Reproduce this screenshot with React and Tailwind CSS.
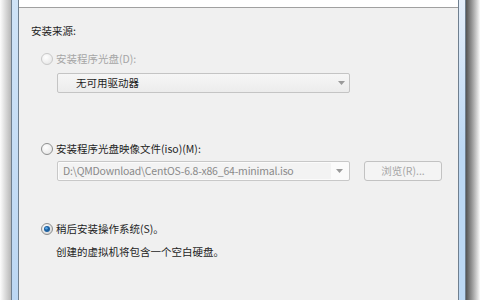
import React from "react";

const font = { fontFamily: '"Noto Sans CJK SC", "Noto Sans", sans-serif' };

const Radio = ({ checked, disabled }) => (
  <svg width="12" height="12" viewBox="0 0 12 12" className="shrink-0">
    <defs>
      <radialGradient id={checked ? "rg-on" : "rg-off"} cx="0.4" cy="0.35" r="0.7">
        <stop offset="0" stopColor="#ffffff" />
        <stop offset="1" stopColor={disabled ? "#e6e6e6" : "#d4d4d4"} />
      </radialGradient>
    </defs>
    <circle
      cx="6"
      cy="6"
      r="5.5"
      fill={`url(#${checked ? "rg-on" : "rg-off"})`}
      stroke={disabled ? "#c8c8c8" : "#8e8f8f"}
    />
    {checked && (
      <>
        <circle cx="6" cy="6" r="3" fill="#1b5f9f" />
        <circle cx="5.4" cy="5.3" r="1.3" fill="#5aa6e6" />
      </>
    )}
  </svg>
);

const Arrow = () => (
  <svg width="7" height="4" viewBox="0 0 7 4">
    <path d="M0 0 L7 0 L3.5 4 Z" fill="#9a9a9a" />
  </svg>
);

export default function App() {
  return (
    <div className="w-[480px] h-[300px] flex overflow-hidden bg-white" style={font}>
      {/* left shadow + frame */}
      <div className="w-[11px] h-full bg-gradient-to-r from-[#fdfdfd] to-[#b8b8b8]" />
      <div className="w-[8px] h-full border-l border-r border-[#6f7f8f] bg-gradient-to-b from-[#cfe3f7] to-[#bcd7f3]" />

      {/* content */}
      <div className="flex-1 h-full bg-[#f0f0f0] flex flex-col text-[10.5px] text-[#1e1e1e]">
        <div className="h-[8px] bg-white border-b border-[#a0a0a0] shrink-0" />

        <div className="pl-[12px] mt-[16px] h-[14px] leading-[14px]">安装来源:</div>

        <div className="pl-[22px] flex flex-col">
          <div className="mt-[14px] h-[14px] flex items-center gap-[3px] text-[#a6a6a6]">
            <Radio disabled />
            <span className="leading-[14px]">安装程序光盘(D):</span>
          </div>

          <div className="mt-[7px] ml-[16px] w-[293px] h-[20px] rounded-[2px] border border-[#c4c4c4] bg-gradient-to-b from-[#f6f6f6] to-[#ececec] flex items-center">
            <span className="pl-[18px] flex-1 leading-[14px]">无可用驱动器</span>
            <div className="w-[14px] flex justify-center mr-[1px]">
              <Arrow />
            </div>
          </div>

          <div className="mt-[49px] h-[14px] flex items-center gap-[3px]">
            <Radio />
            <span className="leading-[14px]">安装程序光盘映像文件(iso)(M):</span>
          </div>

          <div className="mt-[5px] ml-[16px] flex items-center">
            <div className="w-[293px] h-[20px] rounded-[2px] border border-[#c8c8c8] bg-[#fbfbfb] flex items-center p-[1px]">
              <div className="flex-1 h-full bg-[#f3f3f3] flex items-center pl-[4px] text-[#8a8a8a] leading-[14px] tracking-[-0.2px]">
                D:\QMDownload\CentOS-6.8-x86_64-minimal.iso
              </div>
              <div className="w-[17px] flex justify-center">
                <Arrow />
              </div>
            </div>
            <div className="ml-[14px] w-[78px] h-[20px] rounded-[3px] border border-[#c2c2c2] bg-[#f4f4f4] flex items-center justify-center text-[#a6a6a6] leading-[14px]">
              浏览(R)...
            </div>
          </div>

          <div className="mt-[41px] h-[14px] flex items-center gap-[3px]">
            <Radio checked />
            <span className="leading-[14px]">稍后安装操作系统(S)。</span>
          </div>

          <div className="mt-[9px] ml-[15px] h-[14px] leading-[14px]">创建的虚拟机将包含一个空白硬盘。</div>
        </div>
      </div>

      {/* right frame + shadow */}
      <div className="w-[8px] h-full border-l border-r border-[#6f7f8f] bg-gradient-to-b from-[#e4eefa] via-[#bcd8f4] to-[#bcd8f4]" />
      <div className="w-[14px] h-full bg-gradient-to-r from-[#555555] to-[#fafafa]" />
    </div>
  );
}
